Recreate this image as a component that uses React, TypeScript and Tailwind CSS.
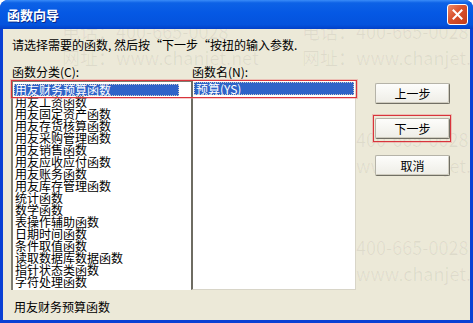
import React from "react";

const cats = [
  "用友财务预算函数",
  "用友工资函数",
  "用友固定资产函数",
  "用友存货核算函数",
  "用友采购管理函数",
  "用友销售函数",
  "用友应收应付函数",
  "用友账务函数",
  "用友库存管理函数",
  "统计函数",
  "数学函数",
  "表操作辅助函数",
  "日期时间函数",
  "条件取值函数",
  "读取数据库数据函数",
  "指针状态类函数",
  "字符处理函数",
];

function Btn({ label }: { label: string }) {
  return (
    <div className="w-[75px] h-[21px] flex items-center justify-center text-[12px] leading-[12px] text-black rounded-[2px] border border-[#B5B3A8] border-r-[#716F64] border-b-[#716F64] bg-[linear-gradient(#FDFDFB,#EEEDE6)] shadow-[inset_-1px_-1px_0_#CFCCBF]">
      {label}
    </div>
  );
}

function Mark() {
  return (
    <div className="flex flex-col gap-[8px]">
      <div>电话：400-665-0028</div>
      <div>网址：www.chanjet.net</div>
    </div>
  );
}

export default function App() {
  const font = { fontFamily: '"Noto Sans CJK SC", "Liberation Sans", sans-serif' };
  return (
    <div className="w-[473px] h-[323px] overflow-hidden bg-white" style={font}>
      <div className="w-[473px] h-[323px] flex flex-col rounded-t-[8px] overflow-hidden bg-[#0A40D4]">
        <div className="h-[29px] shrink-0 flex items-center justify-between pl-[7px] pr-[5px] bg-[linear-gradient(to_bottom,#3A8CF8_0%,#0D62E6_10%,#0558E4_45%,#0453DD_85%,#0240C8_100%)]">
          <span className="text-white font-bold text-[13px] leading-[14px] [text-shadow:1px_1px_0_#0A2A8A]">函数向导</span>
          <div className="w-[21px] h-[21px] rounded-[3px] border border-white bg-[linear-gradient(135deg,#EE8A68,#D8502C_45%,#C23C1A)] flex items-center justify-center">
            <svg width="11" height="11" viewBox="0 0 11 11">
              <path d="M1.5 1.5 L9.5 9.5 M9.5 1.5 L1.5 9.5" stroke="white" strokeWidth="2" strokeLinecap="square" />
            </svg>
          </div>
        </div>
        <div className="relative flex-1 mx-[3px] mb-[3px] bg-[#ECE9D8] overflow-hidden pl-[8px] pt-[8px] text-black">
          {/* watermark overlay */}
          <div className="absolute left-[59px] top-[-7px] pointer-events-none text-[18px] leading-[18px] text-black/[0.06] whitespace-nowrap grid grid-cols-[240px_240px] auto-rows-[108px]">
            <Mark />
            <Mark />
            <Mark />
            <Mark />
            <Mark />
            <Mark />
          </div>

          <div className="relative text-[12px] leading-[16px] ml-[1px] whitespace-nowrap">
            请选择需要的函数, 然后按“下一步“按扭的输入参数.
          </div>

          <div className="relative flex mt-[12px]">
            <div className="w-[180px]">
              <div className="text-[12px] leading-[14px] ml-[1px] h-[14px]">函数分类(C):</div>
              <div className="mt-[1px] h-[210px] bg-white border-l-2 border-t-2 border-l-[#7F7D72] border-t-[#7F7D72] pt-[2px] pl-[1px] pr-[12px]">
                {cats.map((c, i) => (
                  <div
                    key={c}
                    className={
                      i === 0
                        ? "h-[12px] text-[12px] leading-[12px] pl-[1px] text-white bg-[#2F63C8] outline-1 outline-dotted outline-[#C9C9C9] -outline-offset-1 whitespace-nowrap"
                        : "h-[12px] text-[12px] leading-[12px] pl-[1px] whitespace-nowrap"
                    }
                  >
                    {c}
                  </div>
                ))}
              </div>
            </div>
            <div className="w-[165px]">
              <div className="text-[12px] leading-[14px] ml-[1px] h-[14px]">函数名(N):</div>
              <div className="mt-[1px] h-[210px] bg-white border-l-2 border-l-[#6E6C62] border-r border-r-[#D8D5C8] border-b border-b-[#D8D5C8] pt-[2px] pl-[1px] pr-[1px]">
                <div className="h-[13px] text-[12px] leading-[13px] pl-[2px] text-white bg-[#2F63C8] outline-1 outline-dotted outline-[#C9C9C9] -outline-offset-1 whitespace-nowrap">
                  预算(YS)
                </div>
              </div>
            </div>
            <div className="ml-[19px] mt-[18px] flex flex-col">
              <Btn label="上一步" />
              <div className="mt-[14px]">
                <Btn label="下一步" />
              </div>
              <div className="mt-[16px]">
                <Btn label="取消" />
              </div>
            </div>
          </div>

          <div className="relative mt-[10px] ml-[3px] text-[12px] leading-[14px] whitespace-nowrap">用友财务预算函数</div>

          {/* red annotation boxes */}
          <div className="absolute left-[8px] top-[51px] w-[346px] h-[18px] border border-[#D8343C] shadow-[0_0_0_1px_rgba(235,140,140,0.45)] pointer-events-none" />
          <div className="absolute left-[370px] top-[86px] w-[78px] h-[27px] border border-[#D8343C] shadow-[0_0_0_1px_rgba(235,140,140,0.45)] pointer-events-none" />
        </div>
      </div>
    </div>
  );
}
